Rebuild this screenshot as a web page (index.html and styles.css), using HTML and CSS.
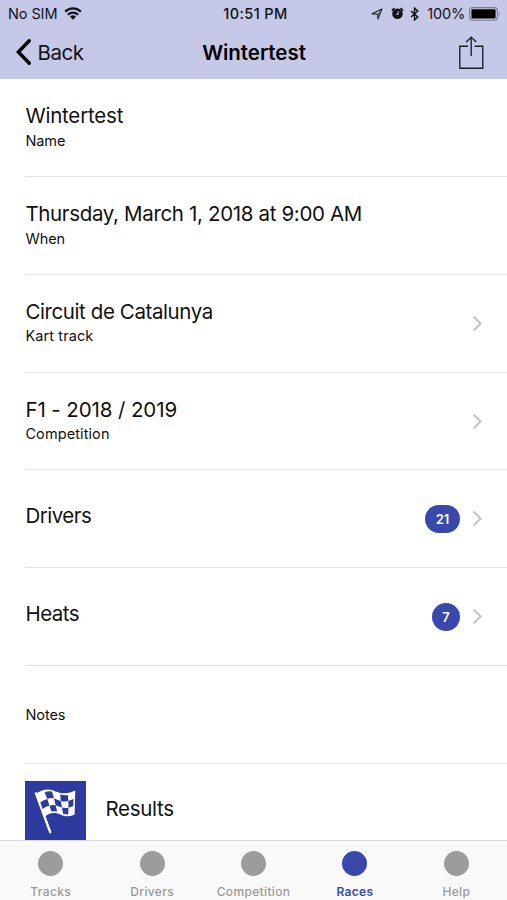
FILE: index.html
```html
<!DOCTYPE html>
<html lang="en">
<head>
<meta charset="utf-8">
<title>Wintertest</title>
<link rel="stylesheet" href="styles.css">
</head>
<body>
<div class="app">
  <header class="header">
    <div class="status">
      <div class="status-left"><span class="carrier">No SIM</span>
        <svg class="wifi" width="18" height="13" viewBox="0 0 18 13"><g fill="none" stroke="#111318" stroke-width="2.2"><path d="M1.2 4.7A11 11 0 0 1 16.8 4.7"/><path d="M3.9 7.8A7.2 7.2 0 0 1 14.1 7.8"/></g><path d="M6 9.7A4.3 4.3 0 0 1 12 9.7L9 12.7Z" fill="#111318"/></svg>
      </div>
      <div class="time">10:51 PM</div>
      <div class="status-right">
        <svg width="12" height="12" viewBox="0 0 12 12"><path d="M1 5.8 11 1 7 11 6.4 6.1Z" fill="none" stroke="#23252f" stroke-width="1.2" stroke-linejoin="round"/><path d="M11 1 6.4 6.1 7 11Z" fill="#5a5c6c"/></svg>
        <svg class="alarm" width="13" height="13" viewBox="0 0 13 13"><circle cx="6.5" cy="6.8" r="5.3" fill="#111318"/><path d="M.9 3.6 3.5 1.2M12.1 3.6 9.5 1.2" stroke="#111318" stroke-width="1.7" fill="none"/><path d="M7.2 4.2V7.2H4.9" fill="none" stroke="#c6c8e7"/></svg>
        <svg class="bluetooth" width="9" height="14" viewBox="0 0 9 14"><path d="M1 4 7.8 10 4.5 12.9V1.1L7.8 4 1 10" fill="none" stroke="#111318" stroke-width="1.4"/></svg>
        <span class="percent">100%</span>
        <svg class="battery" width="32" height="14" viewBox="0 0 32 14"><rect x=".6" y=".6" width="27.8" height="12.6" rx="3" fill="none" stroke="#7c7e94" stroke-width="1.1"/><rect x="2.4" y="2.3" width="24.2" height="9.2" rx="1.2" fill="#000"/><path d="M29.8 4.6Q31.7 6.9 29.8 9.2Z" fill="#7c7e94"/></svg>
      </div>
    </div>
    <nav class="navbar">
      <a class="back"><svg width="17" height="26" viewBox="0 0 17 26"><path d="M14.2 1.8 3.4 13 14.2 24.2" fill="none" stroke="#000" stroke-width="3.4" stroke-linecap="round" stroke-linejoin="miter"/></svg><span>Back</span></a>
      <h1 class="title">Wintertest</h1>
      <svg class="share" width="25" height="34" viewBox="0 0 25 34"><path d="M9 10.2H.8V32.2H23.8V10.2H15.6M12.2 20V1.1M7.2 6.1 12.2 1.1 17.2 6.1" fill="none" stroke="#1b1d27" stroke-width="1.35"/></svg>
    </nav>
  </header>
  <main class="list">
    <div class="row"><div class="text"><div class="value name">Wintertest</div><div class="label">Name</div></div></div>
    <div class="row"><div class="text"><div class="value date">Thursday, March 1, 2018 at 9:00 AM</div><div class="label">When</div></div></div>
    <div class="row"><div class="text"><div class="value track">Circuit de Catalunya</div><div class="label kart">Kart track</div></div><svg class="chevron" width="11" height="17" viewBox="0 0 11 17"><path d="M1.5 1.5 8.7 8.5 1.5 15.5"/></svg></div>
    <div class="row"><div class="text"><div class="value season">F1 - 2018 / 2019</div><div class="label kart">Competition</div></div><svg class="chevron" width="11" height="17" viewBox="0 0 11 17"><path d="M1.5 1.5 8.7 8.5 1.5 15.5"/></svg></div>
    <div class="row"><div class="text"><div class="value single">Drivers</div></div><span class="badge wide">21</span><svg class="chevron" width="11" height="17" viewBox="0 0 11 17"><path d="M1.5 1.5 8.7 8.5 1.5 15.5"/></svg></div>
    <div class="row"><div class="text"><div class="value single">Heats</div></div><span class="badge">7</span><svg class="chevron" width="11" height="17" viewBox="0 0 11 17"><path d="M1.5 1.5 8.7 8.5 1.5 15.5"/></svg></div>
    <div class="row"><div class="text"><div class="label notes">Notes</div></div></div>
    <div class="results">
      <svg class="flag" width="61" height="61" viewBox="0 0 61 61"><rect width="61" height="61" fill="#2d3b9f"/>
        <path d="M11 12.4 25.2 51.2" stroke="#fff" stroke-width="2.4" stroke-linecap="round"/>
        <path d="M10.4 13C13 11.5 16.5 8.5 23 8.5C29 8.5 32 12.3 39 12.3C44 12.3 47 11 50.3 9.5L49.6 33.6C47 35 44 35.6 41 35.2C36 34.5 34 32 29 32C25 32 22.5 33.5 19.4 36Z" fill="#fff"/>
        <g fill="#2d3b9f"><path d="M19.7 11.2Q23 9.7 27 10.4L29 17.2Q25.5 16.6 22.3 18Z"/><path d="M35.2 13.6Q39 14.7 42.8 14.1L43.3 20.1Q39 21 35.8 20Z"/><path d="M15.4 21.4Q18.5 18.8 22.3 18L24.5 24.8Q21 25.4 17.6 28Z"/><path d="M29 17.2Q32 19 35.8 20L37 26.4Q33.5 25.6 30.6 24.2Z"/><path d="M43.3 20.1Q46 19.3 48.5 18.1L48.3 25.1Q46 26.3 43.5 26.7Z"/><path d="M24.5 24.8Q27.5 23.6 30.6 24.2L32.2 30.5Q29.5 29.8 26.5 30.6Z"/><path d="M37 26.4Q40 27.2 43.5 26.7L43.2 33.4Q40.5 33.5 38 32.7Z"/></g>
      </svg>
      <div class="value result">Results</div>
    </div>
  </main>
  <footer class="tabs">
    <a class="tab"><i class="dot"></i><span>Tracks</span></a>
    <a class="tab"><i class="dot"></i><span>Drivers</span></a>
    <a class="tab"><i class="dot"></i><span>Competition</span></a>
    <a class="tab active"><i class="dot"></i><span>Races</span></a>
    <a class="tab"><i class="dot"></i><span>Help</span></a>
  </footer>
</div>
</body>
</html>
```
FILE: styles.css
```css
* { box-sizing: border-box; }
body { margin: 0; background: #fff; color: #111; font-family: Inter, "Liberation Sans", sans-serif; }
svg { display: block; flex: none; }
.app { height: 900px; display: flex; flex-direction: column; overflow: hidden; }
.header { height: 79.4px; flex: none; background: #c6c8e7; color: #111318; }
.status { height: 27px; padding: 0 6px 0 8px; display: grid; grid-template-columns: 1fr auto 1fr; align-items: center; font-size: 14.5px; line-height: 27px; }
.status-left, .status-right { display: flex; align-items: center; }
.status-left { letter-spacing: -.1px; }
.status-right { justify-content: flex-end; }
.wifi { margin-left: 7px; }
.time { font-weight: 500; letter-spacing: .4px; padding-left: 2px; }
.alarm { margin-left: 8px; }
.bluetooth { margin-left: 6px; }
.percent { margin: 0 4px 0 8px; letter-spacing: -.15px; }
.navbar { height: 52px; padding: 0 23px 0 15px; display: grid; grid-template-columns: 1fr auto 1fr; }
.back { display: flex; align-items: center; height: 50px; font-size: 20.5px; letter-spacing: -.5px; }
.back span { margin-left: 5.5px; }
.title { margin: 0; padding-left: 9px; font-size: 20.5px; line-height: 51px; font-weight: 600; letter-spacing: -.05px; color: #000; }
.share { justify-self: end; margin-top: 9px; }
.list { flex: 1; min-height: 0; overflow: hidden; padding-left: 25.4px; }
.row { height: 97.75px; border-bottom: 1px solid #e3e3e3; display: flex; align-items: center; padding-right: 24px; }
.text { flex: 1; height: 100%; padding-top: 24px; }
.value { font-size: 20.5px; line-height: 26px; letter-spacing: -.2px; white-space: nowrap; }
.date { letter-spacing: -.34px; }
.track { letter-spacing: -.4px; }
.season { letter-spacing: -.1px; }
.label { font-size: 14.5px; line-height: 20px; margin-top: 1.5px; letter-spacing: -.05px; }
.kart { letter-spacing: .1px; }
.single { padding-top: 8.5px; letter-spacing: -.5px; }
.notes { margin-top: 15px; }
.badge { width: 28px; height: 28px; border-radius: 14px; background: #3949ab; color: #fff; font-size: 13px; font-weight: 600; line-height: 29px; text-align: center; margin-right: 12px; }
.badge.wide { width: 35px; }
.chevron path { fill: none; stroke: #c4c4c7; stroke-width: 2; }
.results { display: flex; padding-top: 17px; }
.result { margin: 15.5px 0 0 19px; letter-spacing: -.3px; }
.tabs { height: 60px; flex: none; border-top: 1px solid #d9d9d9; background: #f9f9f9; display: flex; }
.tab { flex: 1; display: flex; flex-direction: column; align-items: center; padding-top: 10px; font-size: 12px; line-height: 16px; font-weight: 500; color: #999; letter-spacing: .35px; }
.dot { width: 25px; height: 25px; border-radius: 50%; background: #9c9c9c; margin-bottom: 8px; }
.active { color: #3949ab; font-weight: 600; }
.active .dot { background: #3949ab; }
```
